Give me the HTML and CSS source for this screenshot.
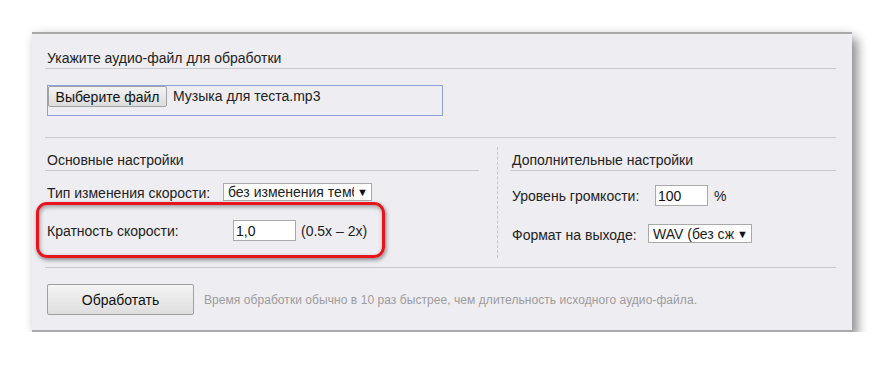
FILE: index.html
```html
<!DOCTYPE html>
<html lang="ru">
<head>
    <meta charset="UTF-8">
    <title>Изменение скорости аудио</title>
    <link rel="stylesheet" href="styles.css">
</head>
<body>
<div class="page">
    <div class="panel">
        <h2 class="block-title">Укажите аудио-файл для обработки</h2>

        <div class="file-box">
            <button class="file-button">Выберите файл</button>
            <span class="file-name">Музыка для теста.mp3</span>
        </div>

        <div class="line"></div>

        <div class="columns">
            <div class="col col-left">
                <h3 class="col-title">Основные настройки</h3>

                <div class="row row-type">
                    <span class="label label-type">Тип изменения скорости:</span>
                    <span class="select select-type">
                        <span class="select-text">без изменения тембра</span>
                        <span class="arrow">▼</span>
                    </span>
                </div>

                <div class="row row-rate">
                    <span class="label label-rate">Кратность скорости:</span>
                    <input class="field field-rate" type="text" value="1,0">
                    <span class="hint-range">(0.5x – 2x)</span>
                </div>
            </div>

            <div class="divider"></div>

            <div class="col col-right">
                <h3 class="col-title">Дополнительные настройки</h3>

                <div class="row row-volume">
                    <span class="label label-volume">Уровень громкости:</span>
                    <input class="field field-volume" type="text" value="100">
                    <span class="unit">%</span>
                </div>

                <div class="row row-format">
                    <span class="label label-format">Формат на выходе:</span>
                    <span class="select select-format">
                        <span class="select-text">WAV (без сжатия)</span>
                        <span class="arrow">▼</span>
                    </span>
                </div>
            </div>
        </div>

        <div class="line line-bottom"></div>

        <div class="actions">
            <button class="process-button">Обработать</button>
            <span class="note">Время обработки обычно в 10 раз быстрее, чем длительность исходного аудио-файла.</span>
        </div>
    </div>
</div>
</body>
</html>
```

FILE: styles.css
```css
body {
    margin: 0;
    background: #ffffff;
    font-family: 'Liberation Sans', Arial, sans-serif;
    color: #222;
}

.page {
    padding: 32px 0 0 32px;
}

.panel {
    width: 820px;
    box-sizing: border-box;
    background: #eeedf2;
    border-top: 2px solid #a9a9a9;
    border-bottom: 2px solid #a9a9a9;
    padding: 0 16px 0 13px;
    box-shadow: 6px 7px 10px rgba(0, 0, 0, 0.4), 0 0 10px rgba(0, 0, 0, 0.1);
}

.block-title {
    margin: 0;
    padding: 16px 0 2px 2px;
    font-size: 14px;
    line-height: 16px;
    font-weight: normal;
    border-bottom: 1px solid #c9c9c9;
}

/* поле выбора файла */
.file-box {
    margin: 16px 0 0 2px;
    width: 396px;
    height: 31px;
    box-sizing: border-box;
    border: 1px solid #8e9fdc;
    display: flex;
    align-items: flex-start;
}

.file-button {
    width: 119px;
    height: 21px;
    margin: 0;
    padding: 0;
    font-family: inherit;
    font-size: 14px;
    color: #111;
    background: linear-gradient(180deg, #f3f3f3 0%, #dcdcdc 100%);
    border: 1px solid #a3a3a3;
    border-radius: 2px;
}

.file-name {
    margin-left: 6px;
    font-size: 14px;
    line-height: 21px;
}

.line {
    margin-top: 21px;
    border-top: 1px solid #c9c9c9;
}

.columns {
    display: flex;
    height: 120px;
}

.col-left {
    width: 434px;
}

.col-right {
    flex: 1;
}

.divider {
    margin: 9px 12px 0 18px;
    border-left: 1px dashed #c6c6c6;
}

.col-title {
    margin: 0;
    padding: 14px 0 2px 2px;
    font-size: 14px;
    line-height: 16px;
    font-weight: normal;
    border-bottom: 1px solid #c9c9c9;
}

.row {
    display: flex;
    align-items: center;
    font-size: 14px;
    line-height: 16px;
    padding-left: 2px;
}

.label {
    flex: none;
}

.row-type {
    margin-top: 12px;
}

.label-type {
    width: 176px;
    padding-top: 2px;
}

.row-rate {
    margin-top: 19px;
    position: relative;
}

/* красная рамка-выделение */
.row-rate::after {
    content: '';
    position: absolute;
    left: -9px;
    top: -18px;
    width: 343px;
    height: 50px;
    border: 3px solid #e8141b;
    border-radius: 11px;
    box-shadow: 1px 2px 4px rgba(0, 0, 0, 0.45), inset 1px 2px 4px rgba(0, 0, 0, 0.35);
    pointer-events: none;
}

.label-rate {
    width: 186px;
}

.row-volume {
    margin-top: 14px;
}

.label-volume {
    width: 143px;
}

.row-format {
    margin-top: 18px;
}

.label-format {
    width: 136px;
    padding-top: 3px;
}

.field {
    height: 21px;
    box-sizing: border-box;
    margin: 0;
    padding: 0 2px;
    border: 1px solid #a9a9a9;
    background: #fff;
    font-family: inherit;
    font-size: 14px;
    color: #111;
}

.field-rate {
    width: 63px;
}

.field-volume {
    width: 53px;
}

.hint-range {
    margin-left: 5px;
}

.unit {
    margin-left: 6px;
}

.select {
    display: flex;
    align-items: center;
    height: 18px;
    box-sizing: border-box;
    border: 1px solid #a9a9a9;
    background: #fff;
    padding: 0 3px 0 4px;
}

.select-text {
    overflow: hidden;
    white-space: nowrap;
}

.select-type {
    width: 149px;
}

.select-type .select-text {
    width: 126px;
}

.select-format {
    width: 104px;
    height: 19px;
}

.select-format .select-text {
    width: 81px;
}

.arrow {
    margin-left: 3px;
    font-size: 11px;
    color: #111;
}

.line-bottom {
    margin-top: 9px;
}

.actions {
    display: flex;
    align-items: center;
    padding: 16px 0 15px 2px;
}

.process-button {
    width: 147px;
    height: 31px;
    margin: 0;
    font-family: inherit;
    font-size: 14px;
    color: #111;
    background: linear-gradient(180deg, #f4f4f4 0%, #dedede 100%);
    border: 1px solid #a0a0a0;
    border-radius: 2px;
}

.note {
    margin-left: 10px;
    font-size: 12px;
    color: #9c9c9c;
    letter-spacing: 0.06px;
}
```
